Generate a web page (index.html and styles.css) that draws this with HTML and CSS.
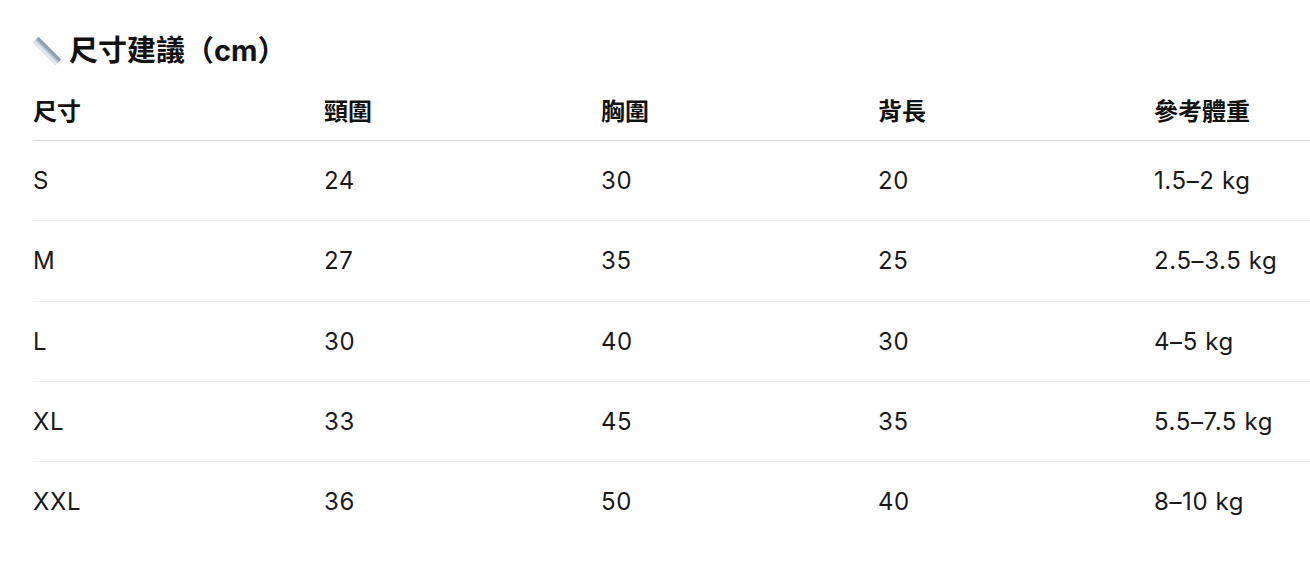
FILE: index.html
```html
<!DOCTYPE html>
<html lang="zh-Hant">
<head>
<meta charset="utf-8">
<title>尺寸建議</title>
<link rel="stylesheet" href="styles.css">
</head>
<body>
<section class="size-guide">
  <h2 class="title">
    <svg class="ruler" width="30" height="30" viewBox="0 0 30 30" aria-hidden="true">
      <g transform="rotate(45 15 15)">
        <rect x="-1" y="11" width="32" height="8" rx="1" fill="#b9c6d6"/>
        <rect x="-1" y="11" width="32" height="3" rx="1" fill="#8e9fb4"/>
        <rect x="-1" y="16" width="32" height="3" rx="1" fill="#dfe6ee"/>
      </g>
    </svg>
    <span>尺寸建議（cm）</span>
  </h2>
  <table class="size-table">
    <colgroup>
      <col class="c1"><col class="c2"><col class="c3"><col class="c4"><col class="c5">
    </colgroup>
    <thead>
      <tr><th>尺寸</th><th>頸圍</th><th>胸圍</th><th>背長</th><th>參考體重</th></tr>
    </thead>
    <tbody>
      <tr><td>S</td><td>24</td><td>30</td><td>20</td><td>1.5–2 kg</td></tr>
      <tr><td>M</td><td>27</td><td>35</td><td>25</td><td>2.5–3.5 kg</td></tr>
      <tr><td>L</td><td>30</td><td>40</td><td>30</td><td>4–5 kg</td></tr>
      <tr><td>XL</td><td>33</td><td>45</td><td>35</td><td>5.5–7.5 kg</td></tr>
      <tr><td>XXL</td><td>36</td><td>50</td><td>40</td><td>8–10 kg</td></tr>
    </tbody>
  </table>
</section>
</body>
</html>
```
FILE: styles.css
```css
html, body {
  margin: 0;
  padding: 0;
  background: #ffffff;
}
body {
  font-family: Inter, "Noto Sans CJK TC", sans-serif;
  color: #1a1a1a;
}
.size-guide {
  padding: 31px 0 0 33px;
}
.title {
  display: flex;
  align-items: center;
  gap: 7px;
  margin: 0 0 12px 0;
  height: 40px;
  font-size: 29px;
  font-weight: 700;
  line-height: 40px;
  color: #111;
}
.ruler {
  flex: none;
  margin-left: -1px;
}
.size-table {
  border-collapse: collapse;
  table-layout: fixed;
  width: 100%;
}
.c1 { width: 291px; }
.c2 { width: 277px; }
.c3 { width: 277px; }
.c4 { width: 276px; }
.size-table th {
  text-align: left;
  font-size: 24px;
  font-weight: 700;
  line-height: 34px;
  padding: 12px 0 11px 0;
  border-bottom: 1px solid #dcdcdc;
  color: #111;
  white-space: nowrap;
}
.size-table td {
  font-size: 24px;
  letter-spacing: 0.6px;
  line-height: 34px;
  padding: 23px 0 22.25px 0;
  border-bottom: 1px solid #f0f0f0;
  color: #1a1a1a;
  white-space: nowrap;
}
.size-table tbody tr:last-child td {
  border-bottom: none;
}
```
